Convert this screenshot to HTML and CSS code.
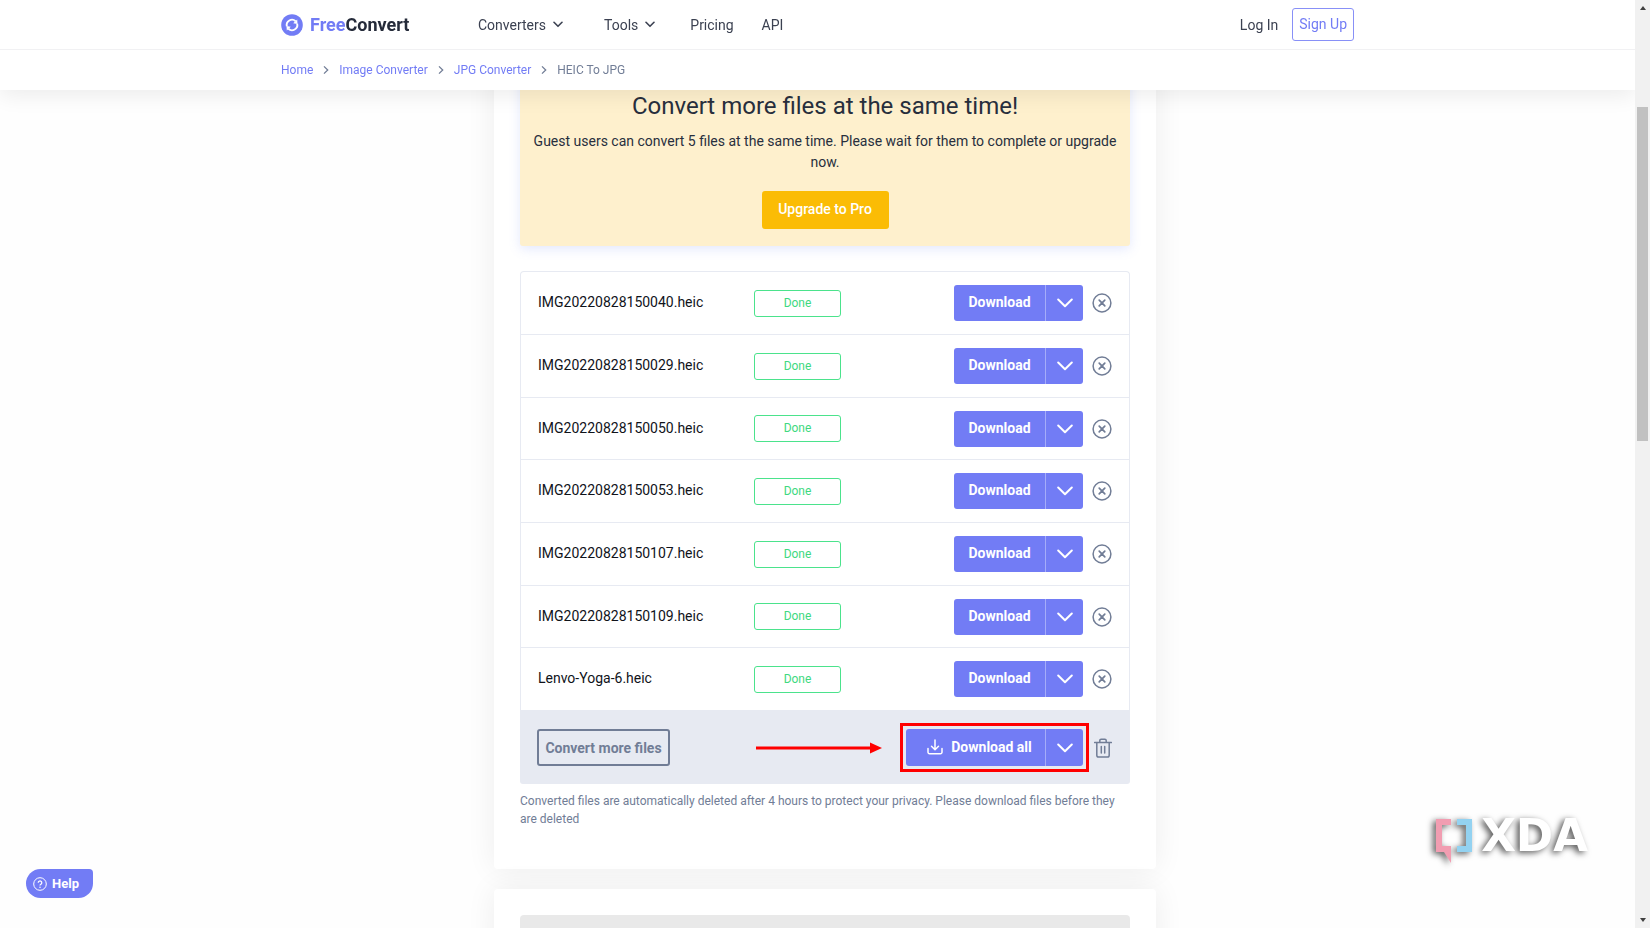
FILE: index.html
```html
<!DOCTYPE html>
<html lang="en">
<head>
<meta charset="utf-8">
<title>HEIC to JPG - FreeConvert</title>
<meta name="viewport" content="width=device-width, initial-scale=1">
<link rel="stylesheet" href="styles.css">
</head>
<body>
<svg class="sprite" aria-hidden="true">
  <symbol id="caret" viewBox="0 0 10 7"><path d="M1 1.3l4 4 4-4" fill="none" stroke="currentColor" stroke-width="1.6" stroke-linecap="round" stroke-linejoin="round"/></symbol>
  <symbol id="sep" viewBox="0 0 6 10"><path d="M1 1.4l3.7 3.6L1 8.600" fill="none" stroke="currentColor" stroke-width="1.3"/></symbol>
  <symbol id="chevron" viewBox="0 0 16 10"><path d="M1.200 1.500L8 8.200l6.800-6.700" fill="none" stroke="currentColor" stroke-width="2" stroke-linecap="round" stroke-linejoin="round"/></symbol>
  <symbol id="remove" viewBox="0 0 20 20"><circle cx="10" cy="10" r="8.900" fill="none" stroke="currentColor" stroke-width="1.500"/><path d="M7.200 7.200l5.600 5.600M12.800 7.200l-5.600 5.600" stroke="currentColor" stroke-width="1.700" stroke-linecap="round"/></symbol>
</svg>

<header class="topbar">
  <div class="wrap nav">
    <a class="brand" href="#">
      <svg class="brand-mark" viewBox="0 0 22 22" aria-hidden="true"><circle cx="11" cy="11" r="10.800" fill="#727cf5"/><path d="M5.800 12.200A5.300 5.300 0 0 1 14.600 7.200M16.200 9.800A5.300 5.300 0 0 1 7.400 14.800" fill="none" stroke="#fff" stroke-width="1.900"/><path d="M12.200 9.200l4.300.7-.3-4.500zM9.800 12.800l-4.300-.7.3 4.500z" fill="#fff"/></svg>
      <span><span class="accent">Free</span>Convert</span>
    </a>
    <nav class="links" aria-label="Main">
      <a class="link link-menu" href="#">Converters <svg class="caret"><use href="#caret"/></svg></a>
      <a class="link link-menu" href="#">Tools <svg class="caret"><use href="#caret"/></svg></a>
      <a class="link" href="#">Pricing</a>
      <a class="link" href="#">API</a>
    </nav>
    <a class="link login" href="#">Log In</a>
    <a class="signup" href="#">Sign Up</a>
  </div>
  <nav class="crumbbar" aria-label="Breadcrumb">
    <div class="wrap crumbs">
      <a href="#">Home</a><svg class="sep"><use href="#sep"/></svg>
      <a href="#">Image Converter</a><svg class="sep"><use href="#sep"/></svg>
      <a href="#">JPG Converter</a><svg class="sep"><use href="#sep"/></svg>
      <span>HEIC To JPG</span>
    </div>
  </nav>
</header>

<main class="page">
  <section class="card">
    <div class="promo">
      <h2 class="promo-title">Convert more files at the same time!</h2>
      <p class="promo-text">Guest users can convert 5 files at the same time. Please wait for them to complete or upgrade now.</p>
      <button class="upgrade" type="button">Upgrade to Pro</button>
    </div>

    <table class="files">
      <tbody>
        <tr><td class="name">IMG20220828150040.heic</td><td><span class="done">Done</span></td><td class="actions"><div class="tools"><div class="split"><button class="main-btn" type="button">Download</button><button class="more-btn" type="button" aria-label="More options"><svg class="chevron"><use href="#chevron"/></svg></button></div><button class="icon-btn" type="button" aria-label="Remove"><svg class="remove"><use href="#remove"/></svg></button></div></td></tr>
        <tr><td class="name">IMG20220828150029.heic</td><td><span class="done">Done</span></td><td class="actions"><div class="tools"><div class="split"><button class="main-btn" type="button">Download</button><button class="more-btn" type="button" aria-label="More options"><svg class="chevron"><use href="#chevron"/></svg></button></div><button class="icon-btn" type="button" aria-label="Remove"><svg class="remove"><use href="#remove"/></svg></button></div></td></tr>
        <tr><td class="name">IMG20220828150050.heic</td><td><span class="done">Done</span></td><td class="actions"><div class="tools"><div class="split"><button class="main-btn" type="button">Download</button><button class="more-btn" type="button" aria-label="More options"><svg class="chevron"><use href="#chevron"/></svg></button></div><button class="icon-btn" type="button" aria-label="Remove"><svg class="remove"><use href="#remove"/></svg></button></div></td></tr>
        <tr><td class="name">IMG20220828150053.heic</td><td><span class="done">Done</span></td><td class="actions"><div class="tools"><div class="split"><button class="main-btn" type="button">Download</button><button class="more-btn" type="button" aria-label="More options"><svg class="chevron"><use href="#chevron"/></svg></button></div><button class="icon-btn" type="button" aria-label="Remove"><svg class="remove"><use href="#remove"/></svg></button></div></td></tr>
        <tr><td class="name">IMG20220828150107.heic</td><td><span class="done">Done</span></td><td class="actions"><div class="tools"><div class="split"><button class="main-btn" type="button">Download</button><button class="more-btn" type="button" aria-label="More options"><svg class="chevron"><use href="#chevron"/></svg></button></div><button class="icon-btn" type="button" aria-label="Remove"><svg class="remove"><use href="#remove"/></svg></button></div></td></tr>
        <tr><td class="name">IMG20220828150109.heic</td><td><span class="done">Done</span></td><td class="actions"><div class="tools"><div class="split"><button class="main-btn" type="button">Download</button><button class="more-btn" type="button" aria-label="More options"><svg class="chevron"><use href="#chevron"/></svg></button></div><button class="icon-btn" type="button" aria-label="Remove"><svg class="remove"><use href="#remove"/></svg></button></div></td></tr>
        <tr><td class="name">Lenvo-Yoga-6.heic</td><td><span class="done">Done</span></td><td class="actions"><div class="tools"><div class="split"><button class="main-btn" type="button">Download</button><button class="more-btn" type="button" aria-label="More options"><svg class="chevron"><use href="#chevron"/></svg></button></div><button class="icon-btn" type="button" aria-label="Remove"><svg class="remove"><use href="#remove"/></svg></button></div></td></tr>
      </tbody>
    </table>

    <div class="bulk">
      <button class="convert-more" type="button">Convert more files</button>
      <svg class="arrow" viewBox="0 0 126 12" aria-hidden="true"><path d="M0 6h116" stroke="#f00" stroke-width="3"/><path d="M114 .5L126 6l-12 5.500z" fill="#f00"/></svg>
      <div class="highlight">
        <div class="split split-all">
          <button class="main-btn main-btn-all" type="button"><svg class="dl" viewBox="0 0 16 16" aria-hidden="true"><path d="M1 9.500v3.700a1.500 1.500 0 0 0 1.500 1.500h11a1.500 1.500 0 0 0 1.500-1.500V9.500M8 1v9.500M4.500 7.200L8 10.700l3.500-3.500" fill="none" stroke="currentColor" stroke-width="1.500" stroke-linecap="round" stroke-linejoin="round"/></svg>Download all</button><button class="more-btn" type="button" aria-label="More options"><svg class="chevron"><use href="#chevron"/></svg></button>
        </div>
      </div>
      <button class="icon-btn" type="button" aria-label="Delete all"><svg class="trash" viewBox="0 0 18 20" aria-hidden="true"><path d="M.6 4.500h16.800M2.800 4.500v12.700a1.800 1.800 0 0 0 1.800 1.800h8.800a1.800 1.800 0 0 0 1.800-1.800V4.500M5.800 4.300V2.500A1.300 1.300 0 0 1 7.100 1.200h3.800a1.300 1.300 0 0 1 1.300 1.300v1.800M7.300 8.500v6.500M10.700 8.500v6.500" fill="none" stroke="currentColor" stroke-width="1.500" stroke-linecap="round"/></svg></button>
    </div>
    <p class="note">Converted files are automatically deleted after 4 hours to protect your privacy. Please download files before they are deleted</p>
  </section>

  <section class="card card-next"><div class="placeholder"></div></section>
</main>

<button class="help" type="button"><svg class="help-icon" viewBox="0 0 14 14" aria-hidden="true"><circle cx="7" cy="7" r="6.300" fill="none" stroke="currentColor"/><path d="M5.200 5.700a1.800 1.800 0 1 1 2.700 1.600c-.7.400-.9.600-.9 1.200" fill="none" stroke="currentColor" stroke-width="1.200"/><circle cx="7" cy="10.200" r=".75" fill="currentColor"/></svg>Help</button>

<div class="watermark">
  <svg class="wm-mark" viewBox="0 0 38 46" aria-hidden="true"><path d="M1 1h15v6H7v21h9v17L9 34H1z" fill="#f19db1"/><path d="M37 1H22v6h9v21h-9v6h15z" fill="#93d2f1"/></svg>
  <span>XDA</span>
</div>

<div class="scrollbar" aria-hidden="true">
  <svg class="sb-arrow" viewBox="0 0 6 4"><path d="M0 4l3-4 3 4z" fill="#404040"/></svg>
  <div class="sb-track"><div class="sb-thumb"></div></div>
  <svg class="sb-arrow" viewBox="0 0 6 4"><path d="M0 0l3 4 3-4z" fill="#404040"/></svg>
</div>
</body>
</html>
```
FILE: styles.css
```css
* { box-sizing: border-box; }
html, body { height: 100%; }
body {
  margin: 0;
  overflow: hidden;
  background: #fefefe;
  color: #282f3d;
  font-family: Roboto, "Noto Sans", sans-serif;
  font-size: 14px;
}
a { color: inherit; text-decoration: none; }
button { font: inherit; color: inherit; border: 0; padding: 0; background: none; cursor: pointer; }
svg { display: block; flex: none; }
.sprite { position: absolute; width: 0; height: 0; }

/* Header */
.topbar {
  position: fixed;
  z-index: 2;
  top: 0;
  left: 0;
  right: 15px;
  background: #fff;
  box-shadow: 0 6px 20px rgba(0, 0, 0, .07);
}
.wrap { width: 100%; max-width: 1073px; margin: 0 auto; display: flex; align-items: center; }
.nav { height: 49px; }
.brand { display: flex; align-items: center; gap: 7px; width: 197px; font-size: 18px; font-weight: 700; color: #252b3a; }
.brand-mark { width: 22px; height: 22px; }
.accent { color: #727cf5; }
.links { display: flex; flex: 1; gap: 28px; }
.link { color: #3b4151; font-size: 14px; }
.link-menu { display: flex; align-items: center; gap: 7px; margin-right: 7px; }
.link-menu:first-child { margin-right: 13px; }
.caret { width: 10px; height: 7px; }
.login { margin-right: 14px; }
.signup {
  height: 33px;
  padding: 0 6px;
  border: 1px solid #8890f7;
  border-radius: 3px;
  color: #727cf5;
  font-size: 14px;
  line-height: 31px;
}
.crumbbar { border-top: 1px solid #f1f1f3; }
.crumbs { height: 40px; gap: 10px; color: #727cf5; font-size: 12px; }
.crumbs span { color: #717d96; }
.sep { width: 6px; height: 10px; color: #717d96; }

/* Page */
.page { padding: 60px 16px 0; }
.card {
  max-width: 662px;
  margin: 0 auto 20px;
  padding: 0 26px 41px;
  background: #fff;
  border-radius: 4px;
  box-shadow: 0 0 30px rgba(0, 0, 0, .07);
}
.promo {
  padding: 30px 8px 17px;
  text-align: center;
  background: #fef0cd;
  border-radius: 3px;
  box-shadow: 0 3px 12px rgba(114, 140, 245, .2);
}
.promo-title { margin: 0; font-size: 24px; line-height: 32px; font-weight: 400; }
.promo-text { margin: 9px 0 18px; line-height: 21px; }
.upgrade { width: 127px; height: 38px; padding-bottom: 2px; border-radius: 3px; background: #fbbc05; color: #fff; font-weight: 500; }

/* File list */
.files {
  width: 100%;
  margin-top: 25px;
  border: 1px solid #e7eaf2;
  border-bottom: 0;
  border-radius: 4px 4px 0 0;
  border-spacing: 0;
  table-layout: fixed;
}
.files td { height: 63px; padding: 0; border-bottom: 1px solid #e7eaf2; vertical-align: middle; }
.files tr:nth-child(3n) td { height: 62px; }
.files .name { width: 233px; padding: 0 0 2px 17px; color: #10131a; }
.done {
  display: block;
  width: 87px;
  height: 27px;
  border: 1px solid #4be38c;
  border-radius: 3px;
  color: #3fd97f;
  font-size: 12px;
  line-height: 24px;
  text-align: center;
}
.tools { display: flex; align-items: center; justify-content: flex-end; gap: 9px; padding-right: 17px; }
.split { display: flex; height: 36px; color: #fff; font-weight: 700; }
.split-all { height: 37px; }
.main-btn { width: 91px; padding-bottom: 2px; border-radius: 3px 0 0 3px; background: #727cf5; }
.more-btn { display: flex; align-items: center; justify-content: center; width: 38px; border-left: 1px solid #a5acf9; border-radius: 0 3px 3px 0; background: #727cf5; }
.chevron { width: 16px; height: 10px; }
.icon-btn { color: #717d96; }
.remove { width: 20px; height: 20px; }

/* Bulk actions */
.bulk { display: flex; align-items: center; height: 73px; padding: 0 18px 0 17px; border-radius: 0 0 3px 3px; background: #e7eaf2; }
.convert-more { width: 133px; height: 37px; border: 2px solid #717d96; border-radius: 3px; color: #717d96; font-weight: 700; }
.arrow { width: 126px; height: 12px; margin: 0 18px 0 auto; }
.highlight { padding: 3px; border: 3px solid #f00; margin-right: 5px; }
.main-btn-all { display: flex; align-items: center; justify-content: center; gap: 8px; width: 139px; padding-left: 8px; }
.dl { width: 16px; height: 16px; }
.trash { width: 18px; height: 20px; }
.note { margin: 8px 0 0; color: #717d96; font-size: 12px; line-height: 18px; }
.card-next { padding-top: 26px; }
.placeholder { height: 120px; border-radius: 4px; background: #e9e9e9; }

/* Floating pieces */
.help {
  position: fixed;
  left: 26px;
  bottom: 30px;
  display: flex;
  align-items: center;
  gap: 5px;
  height: 29px;
  padding: 0 14px 0 7px;
  border-radius: 15px 4px 15px 15px;
  background: #727cf5;
  color: #fff;
  font-size: 13px;
  font-weight: 700;
}
.help-icon { width: 14px; height: 14px; }
.watermark {
  position: fixed;
  right: 62px;
  bottom: 64px;
  display: flex;
  gap: 8px;
  color: #fff;
  font: 700 45px/36px "DejaVu Sans", sans-serif;
  filter: drop-shadow(-3px 2px 3px rgba(0, 0, 0, .65));
}
.wm-mark { width: 38px; height: 46px; }
.scrollbar {
  position: fixed;
  z-index: 3;
  top: 0;
  right: 0;
  bottom: 0;
  display: flex;
  flex-direction: column;
  align-items: center;
  width: 15px;
  padding: 6px 0;
  background: #f1f1f1;
}
.sb-arrow { width: 6px; height: 4px; }
.sb-track { flex: 1; width: 11px; padding-top: 97px; }
.sb-thumb { height: 334px; background: #c1c1c1; }
```
